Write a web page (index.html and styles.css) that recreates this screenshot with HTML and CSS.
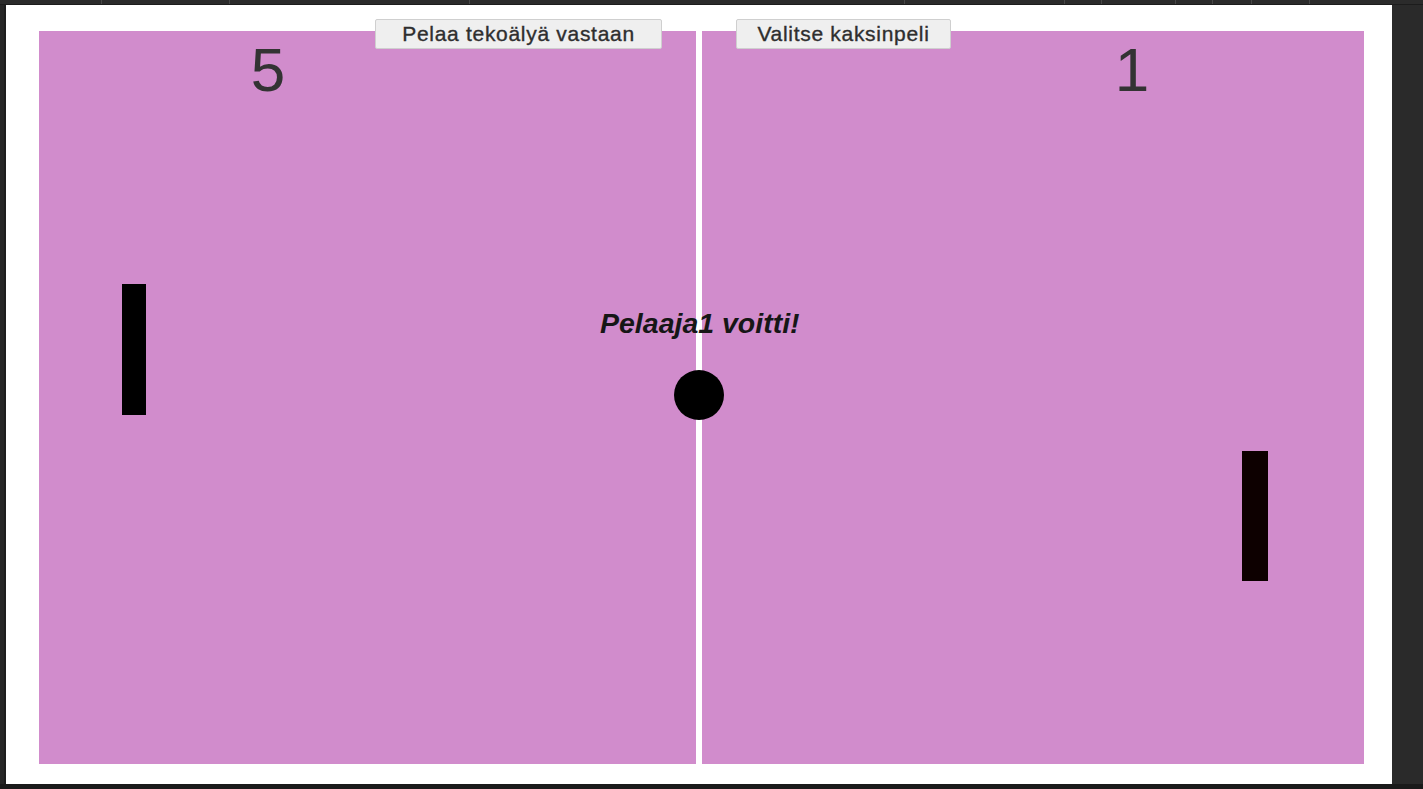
FILE: index.html
```html
<!DOCTYPE html>
<html lang="fi">
<head>
<meta charset="utf-8">
<title>Pong</title>
<link rel="stylesheet" href="styles.css">
</head>
<body>
<div class="window">
  <div class="topbar">
    <div class="tab t1"></div>
    <div class="tab t2"></div>
    <div class="tab t3"></div>
    <div class="tab t4"></div>
    <div class="tab t5"></div>
    <div class="tab t6"></div>
    <div class="tab t7"></div>
    <div class="tab t8"></div>
    <div class="tab t9"></div>
    <div class="tab t10"></div>
    <div class="tab t11"></div>
  </div>
  <div class="main">
    <div class="leftedge"><div class="edge-a"></div><div class="edge-b"></div></div>
    <div class="frame">
      <button class="btn btn-ai">Pelaa tekoälyä vastaan</button>
      <button class="btn btn-duo">Valitse kaksinpeli</button>
      <div class="court">
        <div class="half half-left"></div>
        <div class="half half-right"></div>
        <div class="score score-left">5</div>
        <div class="score score-right">1</div>
        <div class="paddle paddle-left"></div>
        <div class="paddle paddle-right"></div>
        <div class="message">Pelaaja1 voitti!</div>
        <div class="ball"></div>
      </div>
    </div>
    <div class="rightpanel"></div>
  </div>
  <div class="bottombar"></div>
</div>
</body>
</html>
```

FILE: styles.css
```css
html, body {
  margin: 0;
  padding: 0;
  background: #2a2a2a;
  font-family: "Liberation Sans", Arial, sans-serif;
}

.window {
  display: flex;
  flex-direction: column;
  width: 1423px;
  height: 789px;
  overflow: hidden;
}

.topbar {
  height: 5px;
  display: flex;
  background: #2b2b2b;
  box-shadow: inset 0 -1px 0 #1c1c1c;
}

.tab {
  height: 4px;
  border-right: 1px solid #474747;
  box-sizing: border-box;
}
.t1 { width: 102px; }
.t2 { width: 128px; }
.t3 { width: 240px; }
.t4 { width: 435px; }
.t5 { width: 160px; }
.t6 { width: 37px; }
.t7 { width: 74px; }
.t8 { width: 37px; }
.t9 { width: 39px; }
.t10 { width: 58px; }
.t11 { flex: 1; border-right: none; }

.main {
  height: 779px;
  display: flex;
}

.leftedge {
  width: 6px;
  display: flex;
}
.edge-a { width: 4px; background: #262626; }
.edge-b { width: 2px; background: #1d1d1d; }

.frame {
  position: relative;
  width: 1386px;
  background: #ffffff;
  padding: 26px 28px 20px 33px;
  box-sizing: border-box;
}

.rightpanel {
  flex: 1;
  background: #2a2a2a;
}

.bottombar {
  height: 5px;
  background: #1a1a1a;
}

.court {
  position: relative;
  width: 1325px;
  height: 733px;
  display: flex;
  gap: 6px;
}

.half {
  background: #d18ccc;
  height: 100%;
}
.half-left { width: 657px; }
.half-right { flex: 1; }

.btn {
  position: absolute;
  top: 14px;
  height: 30px;
  z-index: 2;
  display: flex;
  align-items: center;
  justify-content: center;
  padding: 0;
  margin: 0;
  background: #efefef;
  border: 1px solid #cfcfcf;
  border-radius: 2px;
  font-family: "Liberation Sans", Arial, sans-serif;
  font-size: 21px;
  letter-spacing: 0.7px;
  color: #2e2e2e;
  -webkit-text-stroke: 0.35px #2e2e2e;
  box-sizing: border-box;
}
.btn-ai { left: 369px; width: 287px; }
.btn-duo { left: 730px; width: 215px; }

.score {
  position: absolute;
  top: 8px;
  width: 100px;
  text-align: center;
  font-size: 62px;
  line-height: 1;
  color: #333333;
}
.score-left { left: 179px; }
.score-right { left: 1043px; }

.paddle {
  position: absolute;
  background: #000000;
}
.paddle-left { left: 83px; top: 253px; width: 24px; height: 131px; }
.paddle-right { left: 1203px; top: 420px; width: 26px; height: 130px; background: #0d0000; }

.message {
  position: absolute;
  left: 561px;
  top: 278px;
  font-size: 28.5px;
  line-height: 1;
  font-weight: bold;
  font-style: italic;
  color: #161616;
  white-space: nowrap;
}

.ball {
  position: absolute;
  left: 635px;
  top: 339px;
  width: 50px;
  height: 50px;
  border-radius: 50%;
  background: #000000;
}
```
